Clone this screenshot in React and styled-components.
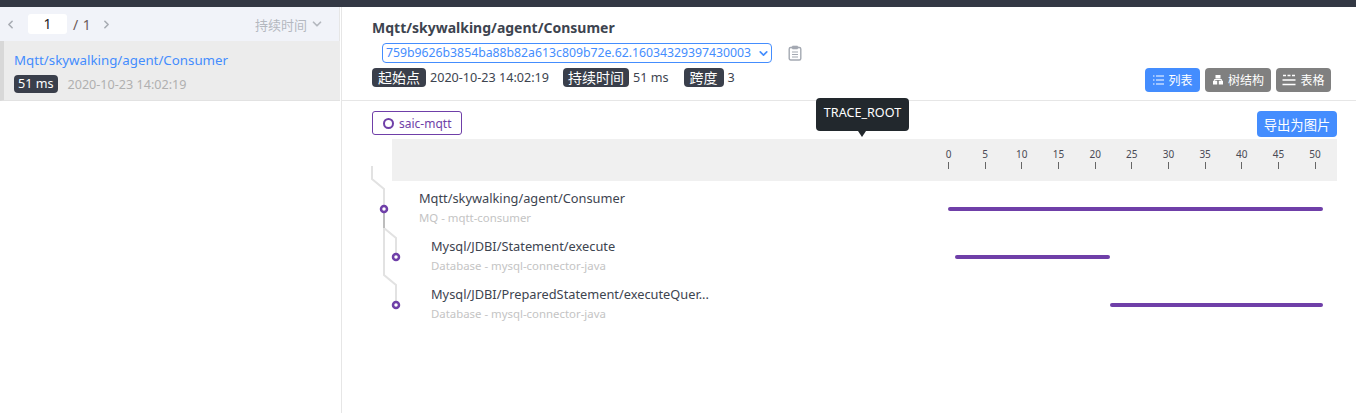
import React from "react";
import styled, { createGlobalStyle } from "styled-components";
import { ChevronLeft, ChevronRight, ChevronDown } from "lucide-react";

const FONT = `"Noto Sans", "Noto Sans CJK SC", sans-serif`;

const GlobalStyle = createGlobalStyle`
  html, body { margin: 0; padding: 0; background: #fff; }
  * { box-sizing: border-box; }
  body { font-family: ${FONT}; color: #3d444f; }
`;

const Page = styled.div`
  width: 1356px;
  height: 413px;
  display: flex;
  flex-direction: column;
  overflow: hidden;
`;

const TopBar = styled.div`
  height: 7px;
  flex: none;
  background: #333844;
`;

const Columns = styled.div`
  flex: 1;
  display: flex;
  min-height: 0;
`;

const Sidebar = styled.aside`
  width: 342px;
  flex: none;
  border-right: 1px solid #e6e6e6;
`;

const SideHeader = styled.div`
  height: 34px;
  display: flex;
  align-items: center;
  padding: 0 0 0 4px;
  background: #f1f3f9;
  color: #a8acb3;
  border-right: 1px solid #e6e6e6;
  margin-right: 1px;
`;

const PageInput = styled.div`
  width: 39px;
  height: 20px;
  margin-left: 11px;
  background: #fff;
  border-radius: 3px;
  color: #222;
  font-size: 14px;
  line-height: 20px;
  text-align: center;
`;

const PageCount = styled.span`
  margin: 0 9px 0 6px;
  font-size: 14px;
  color: #6b5a58;
  word-spacing: 1px;
`;

const SortLabel = styled.div`
  margin-left: auto;
  margin-right: 15px;
  display: flex;
  align-items: center;
  gap: 3px;
  font-size: 13px;
  color: #b4b8bf;
`;

const TraceItem = styled.div`
  height: 60px;
  margin-right: 1px;
  padding: 9px 0 0 10px;
  background: #ececec;
  border-left: 4px solid #d8d8d8;
  border-bottom: 1px solid #e2e2e2;
`;

const TraceLink = styled.div`
  font-size: 13.3px;
  line-height: 20px;
  color: #448dfe;
`;

const TraceMeta = styled.div`
  margin-top: 5px;
  display: flex;
  align-items: center;
  gap: 10px;
  font-size: 12.6px;
  color: #b0b0b0;
`;

const DarkTag = styled.span`
  display: inline-block;
  padding: 0 ${(p) => p.$pad || 6}px;
  height: ${(p) => p.$h || 19}px;
  line-height: ${(p) => p.$h || 19}px;
  border-radius: 4px;
  background: #3a3f4b;
  color: #fff;
  font-size: ${(p) => p.$size || 14}px;
  white-space: nowrap;
`;

const Main = styled.main`
  flex: 1;
  min-width: 0;
  display: flex;
  flex-direction: column;
`;

const Header = styled.header`
  height: 94px;
  flex: none;
  position: relative;
  padding: 11px 25px 0 30px;
  border-bottom: 1px solid #e6e6e6;
`;

const Title = styled.h1`
  margin: 0;
  height: 20px;
  font-size: 14px;
  line-height: 20px;
  font-weight: 700;
  color: #3d444f;
`;

const SelectRow = styled.div`
  margin: 5px 0 0 10px;
  display: flex;
  align-items: center;
  gap: 16px;
  color: #a4a9b2;
`;

const TraceSelect = styled.div`
  width: 390px;
  height: 20px;
  display: flex;
  align-items: center;
  justify-content: space-between;
  padding: 0 1px 0 3px;
  border: 1px solid #448dfe;
  border-radius: 4px;
  font-size: 12.25px;
  line-height: 18px;
  color: #448dfe;
  white-space: nowrap;
`;

const InfoRow = styled.div`
  margin-top: 5px;
  display: flex;
  align-items: center;
  justify-content: flex-start;
`;

const InfoGroup = styled.div`
  display: flex;
  align-items: center;
  gap: 4px;
  margin-right: ${(p) => p.$gap}px;
  font-size: 12.6px;
  color: #3d444f;
`;

const ViewButtons = styled.div`
  position: absolute;
  right: 25px;
  bottom: 8px;
  display: flex;
  gap: 5px;
`;

const ViewButton = styled.button`
  height: 24px;
  width: ${(p) => p.$w}px;
  padding: 0;
  border: 0;
  border-radius: 4px;
  display: flex;
  align-items: center;
  justify-content: center;
  gap: 4px;
  background: ${(p) => (p.$active ? "#448dfe" : "#808080")};
  color: #fff;
  font-family: ${FONT};
  font-size: 12px;
`;

const Chart = styled.section`
  flex: 1;
  position: relative;
  padding: 10px 19px 0 30px;
`;

const ChartTop = styled.div`
  height: 28px;
  display: flex;
  justify-content: space-between;
  align-items: flex-start;
`;

const ServiceChip = styled.div`
  width: 90px;
  height: 24px;
  display: flex;
  align-items: center;
  gap: 5px;
  padding-left: 10px;
  border: 1px solid #6f3fa8;
  border-radius: 3px;
  color: #6f3fa8;
  font-size: 12px;
`;

const ChipRing = styled.span`
  width: 11px;
  height: 11px;
  border: 2px solid #6f3fa8;
  border-radius: 50%;
`;

const ExportButton = styled.button`
  width: 80px;
  height: 26px;
  padding: 0;
  border: 0;
  border-radius: 4px;
  background: #448dfe;
  color: #fff;
  font-family: ${FONT};
  font-size: 13.3px;
`;

const Ruler = styled.div`
  height: 42px;
  margin-left: 20px;
  padding: 8px 0 0 538.2px;
  display: flex;
  background: #f0f0f0;
`;

const Tick = styled.div`
  width: 36.67px;
  display: flex;
  flex-direction: column;
  align-items: center;
  font-size: 10px;
  line-height: 14px;
  color: #4a4a55;
  &::after {
    content: "";
    width: 1px;
    height: 7px;
    margin-top: 1px;
    background: #666;
  }
`;

const Rows = styled.div`
  padding-top: 4px;
`;

const SpanRow = styled.div`
  height: 48px;
  display: flex;
  align-items: center;
`;

const SpanLabel = styled.div`
  width: 576px;
  flex: none;
  margin-bottom: 3px;
  padding-left: ${(p) => 47 + p.$level * 12}px;
`;

const SpanName = styled.div`
  font-size: 12.8px;
  line-height: 19px;
  color: #3d444f;
  white-space: nowrap;
`;

const SpanType = styled.div`
  font-size: 11.4px;
  line-height: 19px;
  color: #c4c4c4;
`;

const BarTrack = styled.div`
  width: 375px;
`;

const Bar = styled.div`
  height: 4px;
  border-radius: 2px;
  background: #6f3fa8;
`;

const Links = styled.svg`
  position: absolute;
  left: 30px;
  top: 65px;
  overflow: visible;
`;

const Tooltip = styled.div`
  position: absolute;
  left: 474px;
  top: -3px;
  width: 93px;
  height: 33px;
  border-radius: 4px;
  background: #22282d;
  color: #fff;
  font-size: 12.6px;
  line-height: 30px;
  text-align: center;
  &::after {
    content: "";
    position: absolute;
    left: 42px;
    top: 33px;
    border: 4px solid transparent;
    border-top: 6px solid #22282d;
    border-bottom: 0;
  }
`;

const ClipboardIcon = () => (
  <svg width="14" height="16" viewBox="0 0 14 16" fill="none" stroke="currentColor">
    <rect x="1.2" y="2.5" width="11.6" height="12.5" rx="1.5" strokeWidth="1.4" />
    <rect x="4" y="1" width="6" height="3" rx="1" fill="currentColor" strokeWidth="0.6" />
    <path d="M4 7h6M4 9.5h6M4 12h6" strokeWidth="1.1" />
  </svg>
);

const ListIcon = () => (
  <svg width="12" height="12" viewBox="0 0 12 12" fill="none" stroke="#fff" strokeWidth="1.2">
    <path d="M4 2h8M4 6h8M4 10h8M1 2h1.5M1 6h1.5M1 10h1.5" />
  </svg>
);

const TreeIcon = () => (
  <svg width="12" height="12" viewBox="0 0 12 12" fill="#fff">
    <path d="M3.5 1h5v3.6h-5zM1 6.8h4.2v3.8H1zM6.8 6.8H11v3.8H6.8z" />
    <path d="M2.2 5h7.6v2H8.8V6H3.2v1h-1z" />
  </svg>
);

const TableIcon = () => (
  <svg width="14" height="12" viewBox="0 0 14 12" fill="none" stroke="#fff" strokeWidth="1.6">
    <path d="M1 1.5h3M5.5 1.5h3M10 1.5h3M0.5 6h13M0.5 10.5h13" />
  </svg>
);

const TICKS = [0, 5, 10, 15, 20, 25, 30, 35, 40, 45, 50];
const TOTAL_MS = 51;

const SPANS = [
  { name: "Mqtt/skywalking/agent/Consumer", type: "MQ - mqtt-consumer", level: 0, start: 0, ms: 51 },
  { name: "Mysql/JDBI/Statement/execute", type: "Database - mysql-connector-java", level: 1, start: 1, ms: 21 },
  { name: "Mysql/JDBI/PreparedStatement/executeQuer...", type: "Database - mysql-connector-java", level: 1, start: 22, ms: 29 },
];

// tree links, coordinates relative to the top of the links layer
const SpanLinks = () => (
  <Links width="40" height="160">
    <g fill="none" stroke="#e2e2e2" strokeWidth="2">
      <path d="M0 0V13L12 23V62" />
      <path d="M12 43V62L24 72V92" />
      <path d="M12 62V109L24 119V139" />
    </g>
    <path d="M12 43V62" stroke="#bdbdbd" strokeWidth="2" />
    <g fill="#fff" stroke="#6f3fa8" strokeWidth="2.5">
      <circle cx="12" cy="43" r="3" />
      <circle cx="24" cy="91" r="3" />
      <circle cx="24" cy="139" r="3" />
    </g>
  </Links>
);

const App = () => {
  return (
    <Page>
      <GlobalStyle />
      <TopBar />
      <Columns>
        <Sidebar>
          <SideHeader>
            <ChevronLeft size={13} strokeWidth={3} />
            <PageInput>1</PageInput>
            <PageCount>/ 1</PageCount>
            <ChevronRight size={13} strokeWidth={3} />
            <SortLabel>
              持续时间
              <ChevronDown size={14} strokeWidth={3} />
            </SortLabel>
          </SideHeader>
          <TraceItem>
            <TraceLink>Mqtt/skywalking/agent/Consumer</TraceLink>
            <TraceMeta>
              <DarkTag $size={12.6} $h={18} $pad={4}>51 ms</DarkTag>
              2020-10-23 14:02:19
            </TraceMeta>
          </TraceItem>
        </Sidebar>
        <Main>
          <Header>
            <Title>Mqtt/skywalking/agent/Consumer</Title>
            <SelectRow>
              <TraceSelect>
                759b9626b3854ba88b82a613c809b72e.62.16034329397430003
                <ChevronDown size={13} strokeWidth={3} />
              </TraceSelect>
              <ClipboardIcon />
            </SelectRow>
            <InfoRow>
              <InfoGroup $gap={14}>
                <DarkTag>起始点</DarkTag>
                2020-10-23 14:02:19
              </InfoGroup>
              <InfoGroup $gap={15}>
                <DarkTag $pad={5}>持续时间</DarkTag>
                51 ms
              </InfoGroup>
              <InfoGroup $gap={0}>
                <DarkTag>跨度</DarkTag>
                3
              </InfoGroup>
            </InfoRow>
            <ViewButtons>
              <ViewButton $active $w={55}><ListIcon />列表</ViewButton>
              <ViewButton $w={66}><TreeIcon />树结构</ViewButton>
              <ViewButton $w={55}><TableIcon />表格</ViewButton>
            </ViewButtons>
          </Header>
          <Chart>
            <ChartTop>
              <ServiceChip><ChipRing />saic-mqtt</ServiceChip>
              <ExportButton>导出为图片</ExportButton>
            </ChartTop>
            <Ruler>
              {TICKS.map((t) => (
                <Tick key={t}>{t}</Tick>
              ))}
            </Ruler>
            <Rows>
              {SPANS.map((s) => (
                <SpanRow key={s.name}>
                  <SpanLabel $level={s.level}>
                    <SpanName>{s.name}</SpanName>
                    <SpanType>{s.type}</SpanType>
                  </SpanLabel>
                  <BarTrack>
                    <Bar
                      style={{
                        marginLeft: `${(s.start / TOTAL_MS) * 100}%`,
                        width: `${(s.ms / TOTAL_MS) * 100}%`,
                      }}
                    />
                  </BarTrack>
                </SpanRow>
              ))}
            </Rows>
            <SpanLinks />
            <Tooltip>TRACE_ROOT</Tooltip>
          </Chart>
        </Main>
      </Columns>
    </Page>
  );
};

export default App;
